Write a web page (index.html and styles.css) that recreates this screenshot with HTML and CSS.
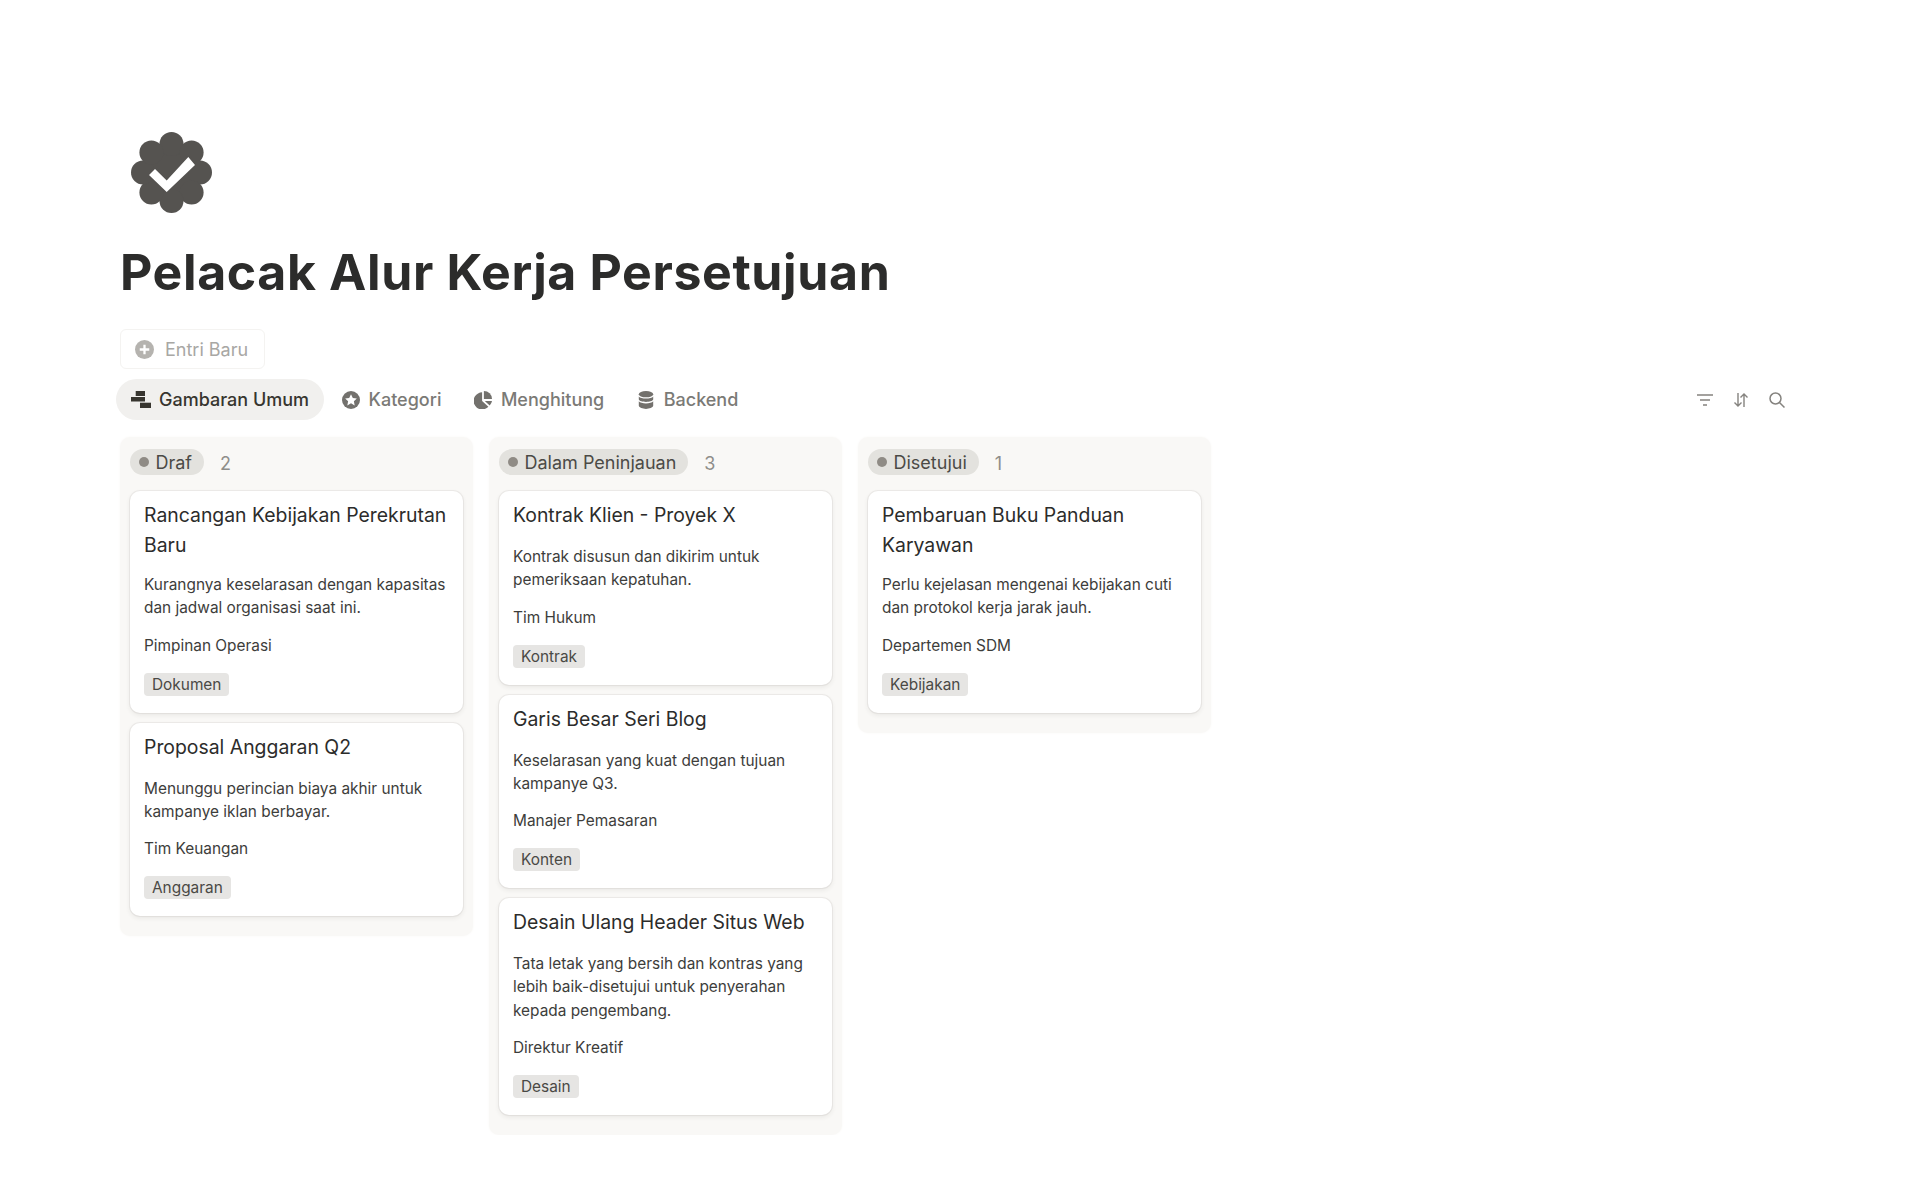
FILE: index.html
```html
<!DOCTYPE html>
<html lang="id">

<head>
  <meta charset="UTF-8">
  <meta name="viewport" content="width=device-width, initial-scale=1.0">
  <title>Pelacak Alur Kerja Persetujuan</title>
  <link rel="stylesheet" href="styles.css">
</head>

<body>
  <div class="page">
    <svg class="page-icon" viewBox="0 0 81 81" fill="#555350">
      <circle cx="40.500" cy="40.500" r="31" />
      <circle cx="40.500" cy="12" r="12" />
      <circle cx="60.600" cy="20.400" r="12" />
      <circle cx="69" cy="40.500" r="12" />
      <circle cx="60.600" cy="60.600" r="12" />
      <circle cx="40.500" cy="69" r="12" />
      <circle cx="20.400" cy="60.600" r="12" />
      <circle cx="12" cy="40.500" r="12" />
      <circle cx="20.400" cy="20.400" r="12" />
      <path fill="#fff" d="M18 43L24 37L35.700 48.400L57.300 25L64 33L35.700 60z" />
    </svg>
    <h1 class="title">Pelacak Alur Kerja Persetujuan</h1>

    <div class="new-row">
      <div class="new-btn">
        <svg class="new-icon" viewBox="0 0 20 20">
          <circle cx="10" cy="10" r="10" fill="#b5b3af" />
          <path stroke="#fff" stroke-width="2.400" d="M10 5v10M5 10h10" />
        </svg>
        Entri Baru
      </div>
    </div>

    <div class="tabs">
      <div class="tab active">
        <svg class="tab-icon wide" viewBox="0 0 20 20" fill="#37352f">
          <rect x="4.700" y="1" width="9.300" height="5" />
          <rect x="0" y="7" width="14" height="4.500" />
          <rect x="9" y="12.700" width="11" height="5.300" />
        </svg>
        Gambaran Umum
      </div>
      <div class="tab">
        <svg class="tab-icon" viewBox="0 0 20 20">
          <circle cx="10" cy="10" r="10" fill="#73716d" />
          <path fill="#fff" d="M10 3.500l2 4.200l4.500.6l-3.300 3.100l.9 4.600l-4.100-2.300l-4.100 2.300l.9-4.600l-3.300-3.100l4.500-.6z" />
        </svg>
        Kategori
      </div>
      <div class="tab">
        <svg class="tab-icon" viewBox="0 0 20 20" fill="#73716d">
          <path d="M9 1.500v9.500l7 6.500a9.500 9.500 0 1 1-7-16z" />
          <path d="M11 0a9 9 0 0 1 9 9h-9z" />
          <path d="M12 11h8a9.500 9.500 0 0 1-2.600 5z" />
        </svg>
        Menghitung
      </div>
      <div class="tab">
        <svg class="tab-icon" viewBox="0 0 20 20" fill="#73716d">
          <ellipse cx="10" cy="3.500" rx="8" ry="3.500" />
          <path d="M2 6c2 3 14 3 16 0v3.500c-1 3.500-15 3.500-16 0z" />
          <path d="M2 11.500c2 3 14 3 16 0v5c-1 4.500-15 4.500-16 0z" />
        </svg>
        Backend
      </div>
      <div class="tools">
        <svg class="tool-icon" viewBox="0 0 18 18" fill="none" stroke="#85837f" stroke-width="1.400">
          <path d="M1 4h16M4 9h10M7 14h4" />
        </svg>
        <svg class="tool-icon" viewBox="0 0 18 18" fill="none" stroke="#85837f" stroke-width="1.400">
          <path d="M6 2v13M2.500 11.500L6 15l3.500-3.500M12 16V3M8.500 6.500L12 3l3.500 3.500" />
        </svg>
        <svg class="tool-icon" viewBox="0 0 18 18" fill="none" stroke="#85837f" stroke-width="1.500">
          <circle cx="7.500" cy="7.500" r="5.500" />
          <path d="M11.500 11.500l5 5" />
        </svg>
      </div>
    </div>

    <div class="board">
      <div class="column">
        <div class="col-head">
          <span class="status"><i class="dot"></i>Draf</span>
          <span class="count">2</span>
        </div>
        <div class="card">
          <div class="card-title long">Rancangan Kebijakan Perekrutan Baru</div>
          <div class="card-text">Kurangnya keselarasan dengan kapasitas dan jadwal organisasi saat ini.</div>
          <div class="card-owner">Pimpinan Operasi</div>
          <span class="tag">Dokumen</span>
        </div>
        <div class="card">
          <div class="card-title">Proposal Anggaran Q2</div>
          <div class="card-text">Menunggu perincian biaya akhir untuk kampanye iklan berbayar.</div>
          <div class="card-owner">Tim Keuangan</div>
          <span class="tag">Anggaran</span>
        </div>
      </div>

      <div class="column">
        <div class="col-head">
          <span class="status"><i class="dot"></i>Dalam Peninjauan</span>
          <span class="count">3</span>
        </div>
        <div class="card">
          <div class="card-title">Kontrak Klien - Proyek X</div>
          <div class="card-text">Kontrak disusun dan dikirim untuk pemeriksaan kepatuhan.</div>
          <div class="card-owner">Tim Hukum</div>
          <span class="tag">Kontrak</span>
        </div>
        <div class="card">
          <div class="card-title">Garis Besar Seri Blog</div>
          <div class="card-text">Keselarasan yang kuat dengan tujuan kampanye Q3.</div>
          <div class="card-owner">Manajer Pemasaran</div>
          <span class="tag">Konten</span>
        </div>
        <div class="card">
          <div class="card-title">Desain Ulang Header Situs Web</div>
          <div class="card-text">Tata letak yang bersih dan kontras yang lebih baik-disetujui untuk penyerahan kepada pengembang.</div>
          <div class="card-owner">Direktur Kreatif</div>
          <span class="tag">Desain</span>
        </div>
      </div>

      <div class="column">
        <div class="col-head">
          <span class="status"><i class="dot"></i>Disetujui</span>
          <span class="count">1</span>
        </div>
        <div class="card">
          <div class="card-title long">Pembaruan Buku Panduan Karyawan</div>
          <div class="card-text">Perlu kejelasan mengenai kebijakan cuti dan protokol kerja jarak jauh.</div>
          <div class="card-owner">Departemen SDM</div>
          <span class="tag">Kebijakan</span>
        </div>
      </div>
    </div>
  </div>
</body>

</html>
```

FILE: styles.css
```css
* {
  box-sizing: border-box;
}

body {
  margin: 0;
  background: #fff;
  color: #2c2c2b;
  font-family: Inter, sans-serif;
}

.page {
  padding: 132px 120px 0;
}

.page-icon {
  display: block;
  width: 81px;
  height: 81px;
  margin-left: 11px;
}

.title {
  margin: 29px 0 0;
  font-size: 50px;
  line-height: 60px;
  font-weight: 700;
  letter-spacing: 0.620px;
}

.new-row {
  display: flex;
  margin-top: 27px;
}

.new-btn {
  display: flex;
  align-items: center;
  gap: 11px;
  height: 40px;
  padding: 0 16px 0 14px;
  border: 1px solid #f4f3f1;
  border-radius: 6px;
  color: #a8a7a4;
  font-size: 18px;
}

.new-icon {
  width: 19px;
  height: 19px;
}

.tabs {
  display: flex;
  align-items: center;
  gap: 2.500px;
  height: 41px;
  margin: 10px 0 0 -4px;
  color: #7b7a76;
  font-size: 18px;
  font-weight: 500;
}

.tab {
  display: flex;
  align-items: center;
  gap: 9px;
  height: 41px;
  padding: 0 15px;
  border-radius: 21px;
}

.tab.active {
  background: #f1f0ee;
  color: #37352f;
}

.tab-icon {
  width: 18px;
  height: 18px;
}

.tab-icon.wide {
  width: 20px;
  height: 20px;
  margin-right: -1px;
}

.tools {
  display: flex;
  gap: 18px;
  margin: 0 0 0 auto;
  padding-right: 14px;
}

.tool-icon {
  width: 18px;
  height: 18px;
}

.board {
  display: flex;
  align-items: flex-start;
  gap: 16px;
  margin-top: 17px;
}

.column {
  width: 353px;
  padding: 12px 10px 20px;
  border-radius: 10px;
  background: #f9f8f6;
  box-shadow: 0 0 3px #f9f8f6;
}

.col-head {
  display: flex;
  align-items: center;
  gap: 16px;
  height: 26px;
  margin-bottom: 16px;
}

.status {
  display: flex;
  align-items: center;
  gap: 6.500px;
  height: 26px;
  padding: 0 12px 0 9px;
  border-radius: 13px;
  background: #e3e2de;
  font-size: 18px;
  color: #4b4a46;
}

.dot {
  width: 10px;
  height: 10px;
  border-radius: 50%;
  background: #8f8b85;
}

.count {
  padding-top: 3px;
  color: #8f8e8a;
  font-size: 18px;
}

.card {
  margin-bottom: 10px;
  padding: 9px 12px 17px 14px;
  border-radius: 10px;
  background: #fff;
  box-shadow: 0 0 0 1px rgba(60, 55, 45, 0.06), 0 2px 5px rgba(60, 55, 45, 0.09);
}

.card:last-child {
  margin-bottom: 0;
}

.card-title {
  font-size: 19.400px;
  line-height: 30px;
  font-weight: 440;
  color: #2c2c2b;
}

.card-title.long {
  margin-bottom: -2px;
}

.card-text {
  margin-top: 15px;
  font-size: 15.400px;
  line-height: 23.300px;
  color: #3d3d3b;
}

.card-owner {
  margin-top: 14px;
  font-size: 15.400px;
  line-height: 23px;
  color: #3d3d3b;
}

.tag {
  display: block;
  width: fit-content;
  margin-top: 16px;
  padding: 0 8px;
  border-radius: 4px;
  background: #e6e5e3;
  font-size: 15.400px;
  line-height: 23px;
  color: #4a4945;
}
```
